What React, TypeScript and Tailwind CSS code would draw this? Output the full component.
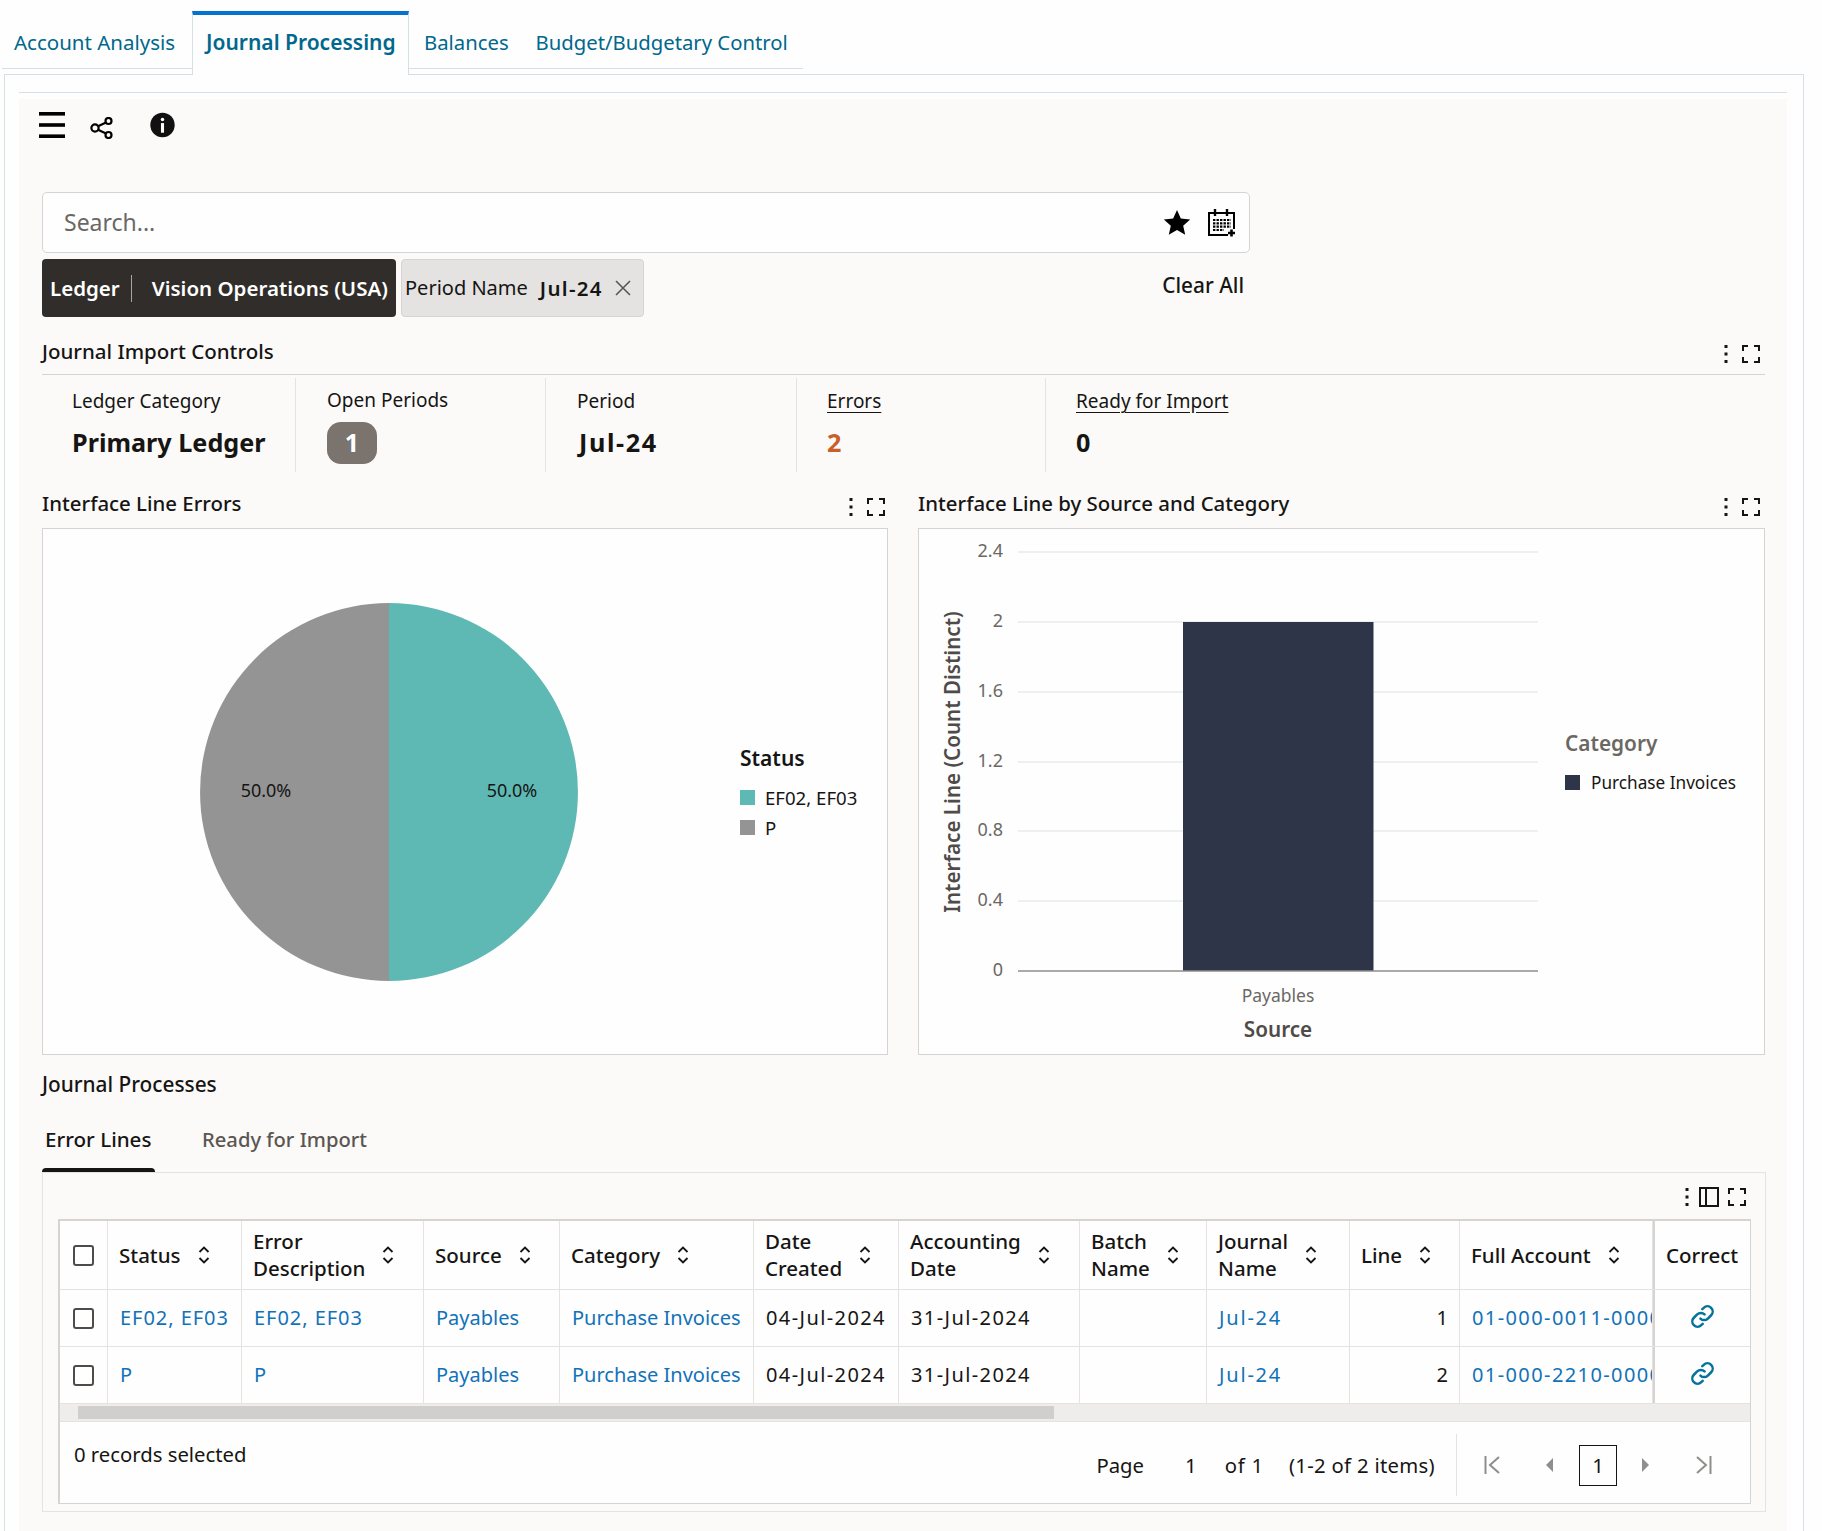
import React from "react";

const Kebab = () => (
  <svg width="5" height="20" viewBox="0 0 5 20" className="shrink-0"><rect x="0.5" y="1" width="3" height="3" fill="#161513"/><rect x="0.5" y="8.5" width="3" height="3" fill="#161513"/><rect x="0.5" y="16" width="3" height="3" fill="#161513"/></svg>
);
const Expand = () => (
  <svg width="18" height="18" viewBox="0 0 18 18" fill="none" stroke="#161513" strokeWidth="2" className="shrink-0">
    <path d="M1 6V1h5M12 1h5v5M17 12v5h-5M6 17H1v-5" />
  </svg>
);
const PanelTools = () => (
  <div className="flex items-center gap-[13px]"><Kebab /><Expand /></div>
);
const Sort = () => (
  <svg width="14" height="20" viewBox="0 0 14 20" fill="none" stroke="#161513" strokeWidth="1.8" className="shrink-0">
    <path d="M2.5 7 7 2.5 11.5 7M2.5 13 7 17.5 11.5 13" />
  </svg>
);
const Check = () => (
  <span className="block h-[21px] w-[21px] rounded-[3px] border-2 border-[#4f4b48] bg-white" />
);
const LinkIcon = () => (
  <svg width="25" height="25" viewBox="0 0 24 24" fill="none" stroke="#04729b" strokeWidth="2.4" strokeLinecap="round" strokeLinejoin="round">
    <path d="M10 14a5 5 0 0 0 7.1 0l3.2-3.2a5 5 0 0 0-7.1-7.1L11.8 5" />
    <path d="M14 10a5 5 0 0 0-7.1 0l-3.2 3.2a5 5 0 0 0 7.1 7.1l1.4-1.3" />
  </svg>
);

const cols = "grid grid-cols-[48px_134px_182px_136px_194px_145px_181px_127px_143px_110px_193px_97px]";
const th = "flex items-center gap-[16px] border-r border-[#e4e3e2] pl-[11px] text-[20.5px] leading-[27px] font-medium text-[#161513]";
const td = "flex items-center overflow-hidden whitespace-nowrap border-r border-[#e4e3e2] pl-[12px] text-[20px]";
const lnk = "text-[#1272b8]";
const num = "text-[20.5px] tracking-[1.4px]";

const headers: [string, string?][] = [
  ["Status"], ["Error", "Description"], ["Source"], ["Category"], ["Date", "Created"], ["Accounting", "Date"], ["Batch", "Name"], ["Journal", "Name"], ["Line"], ["Full Account"],
];
const rows = [
  { s: "EF02, EF03", l: "1", a: "01-000-0011-0000-000" },
  { s: "P", l: "2", a: "01-000-2210-0000-000" },
];

function BarChart() {
  const ys: [string, number][] = [["2.4", 23], ["2", 93], ["1.6", 163], ["1.2", 233], ["0.8", 302], ["0.4", 372]];
  return (
    <svg width="628" height="525" viewBox="0 0 628 525" className="shrink-0" style={{ fontFamily: "'Noto Sans', sans-serif" }}>
      {ys.map(([t, y]) => (
        <g key={t}>
          <line x1="99" x2="619" y1={y} y2={y} stroke="#e9ebea" strokeWidth="1.5" />
          <text x="84" y={y + 5} textAnchor="end" fontSize="18" fill="#6b6864">{t}</text>
        </g>
      ))}
      <text x="84" y="447" textAnchor="end" fontSize="18" fill="#6b6864">0</text>
      <rect x="264" y="93" width="190.5" height="349" fill="#2f3549" />
      <line x1="99" x2="619" y1="442" y2="442" stroke="#8f8e8c" strokeWidth="1.5" />
      <text x="359" y="473" textAnchor="middle" fontSize="17.5" fill="#6b6864">Payables</text>
      <text x="359" y="508" textAnchor="middle" fontSize="20.7" fontWeight="600" fill="#4f4b48">Source</text>
      <text transform="translate(41 233) rotate(-90)" textAnchor="middle" fontSize="20.6" fontWeight="600" fill="#4f4b48">Interface Line (Count Distinct)</text>
    </svg>
  );
}

export default function App() {
  return (
    <div className="h-[1531px] w-[1822px] overflow-hidden bg-[#fefefe] text-[#161513] [font-family:'Noto_Sans',sans-serif]">
      {/* top tabs */}
      <div className="relative z-10 flex h-[74px] items-start pl-[2px] pt-[11px] text-[20.5px] text-[#00688c]">
        <div className="flex h-[58px] w-[190px] items-center border-b border-[#d6dfe6] pl-[12px] pt-[5px]">Account Analysis</div>
        <div className="flex h-[64px] w-[217px] items-start border-x border-t-4 border-[#d6dfe6] border-t-[#0572ce] bg-[#fefefe] pl-[13px] pt-[12px] text-[21px] font-semibold">Journal Processing</div>
        <div className="flex h-[58px] w-[394px] items-center gap-[27px] border-b border-[#d6dfe6] pl-[15px] pt-[5px] text-[20.3px]">
          <span>Balances</span>
          <span>Budget/Budgetary Control</span>
        </div>
      </div>

      {/* outer panel */}
      <div className="ml-[4px] h-[1457px] w-[1800px] border-x border-t border-[#d6dfe6] pl-[14px] pr-[16px] pt-[17px]">
        <div className="h-[1px] bg-[#d6dfe6]" />
        <div className="mt-[6px] h-[1440px] bg-[#fbfaf9] pl-[23px] pr-[22px] pt-[13px]">
          {/* toolbar */}
          <div className="flex h-[26px] items-start">
            <svg width="26" height="26" viewBox="0 0 26 26" className="-ml-[3px] shrink-0"><rect width="26" height="3.6" y="0" fill="#000"/><rect width="26" height="3.6" y="11.2" fill="#000"/><rect width="26" height="3.6" y="22.4" fill="#000"/></svg>
            <svg width="24" height="22" viewBox="0 0 24 22" fill="none" stroke="#000" strokeWidth="2.2" className="ml-[25px] mt-[5px] shrink-0">
              <circle cx="18.5" cy="4" r="3" /><circle cx="18.5" cy="18" r="3" /><circle cx="5" cy="11" r="3.6" />
              <path d="M8 9.2 16 5.4M8 12.8l8 3.8" />
            </svg>
            <svg width="25" height="26" viewBox="0 0 26 26" className="ml-[36px] shrink-0">
              <circle cx="13" cy="13" r="12.7" fill="#111" />
              <rect x="11.2" y="5.5" width="3.6" height="3.6" rx="1.8" fill="#fff" />
              <rect x="11.4" y="11" width="3.2" height="10" fill="#fff" />
            </svg>
          </div>

          {/* search */}
          <div className="mt-[54px] flex h-[61px] w-[1208px] items-center rounded-[5px] border border-[#d5d4d2] bg-[#fefefe] pl-[21px] pr-[13px]">
            <span className="flex-1 text-[23px] text-[#6b6864]">Search...</span>
            <svg width="28" height="27" viewBox="0 0 24 24" className="shrink-0"><path d="M12 .8l3.4 7.6 8.3.9-6.2 5.5 1.8 8.1L12 18.7l-7.3 4.2 1.8-8.1L.3 9.3l8.3-.9z" fill="#000" /></svg>
            <svg width="29" height="29" viewBox="0 0 29 29" fill="none" stroke="#000" strokeWidth="2" className="ml-[16px] shrink-0">
              <path d="M21 27H2V5h25v16" />
              <path d="M8 1v7M20 1v7" strokeWidth="2.4" />
              <path d="M6 12h18M6 15.3h18M6 18.6h18M6 22h11" strokeWidth="2.2" strokeDasharray="2.4 1.1" />
              <path d="M24.5 21.5v7M21 25h7" strokeWidth="2.6" />
            </svg>
          </div>

          {/* chips */}
          <div className="mt-[6px] flex h-[58px] w-[1208px] items-start text-[20.5px]">
            <div className="flex h-[58px] w-[354px] items-center rounded-[4px] bg-[#312d2a] pl-[8px] font-semibold text-white">
              <span className="border-r border-[#a8a6a4] pr-[11px] leading-[27px]">Ledger</span>
              <span className="ml-[20px] whitespace-nowrap">Vision Operations (USA)</span>
            </div>
            <div className="ml-[5px] flex h-[58px] w-[243px] items-center rounded-[4px] border border-[#d5d4d2] bg-[#e4e3e2] pl-[3px] text-[20px]">
              <span>Period Name</span>
              <span className="ml-[12px] text-[20.5px] font-semibold tracking-[1.3px]">Jul-24</span>
              <svg width="16" height="16" viewBox="0 0 16 16" fill="none" stroke="#5b5652" strokeWidth="1.6" className="ml-[12px]"><path d="M1 1l14 14M15 1 1 15" /></svg>
            </div>
            <span className="ml-auto mr-[6px] mt-[11px] text-[20.8px] font-medium">Clear All</span>
          </div>

          {/* controls */}
          <div className="flex h-[58px] items-end justify-between border-b border-[#d5d4d2] pb-[8px]">
            <span className="text-[20.5px] leading-[30px] font-medium">Journal Import Controls</span>
            <span className="mb-[2px] mr-[5px]"><PanelTools /></span>
          </div>
          <div className="grid h-[97px] grid-cols-[254px_250px_251px_249px_1fr] pt-[3px] text-[19px]">
            <div className="border-r border-[#e4e3e2] pl-[30px]">
              <div className="pt-[10px] leading-[27px]">Ledger Category</div>
              <div className="mt-[9px] text-[25.2px] leading-[36px] font-bold">Primary Ledger</div>
            </div>
            <div className="border-r border-[#e4e3e2] pl-[31px]">
              <div className="pt-[9px] leading-[27px]">Open Periods</div>
              <div className="mt-[8px] flex h-[42px] w-[50px] items-center justify-center rounded-[14px] bg-[#7a736e] text-[25px] font-bold text-white">1</div>
            </div>
            <div className="border-r border-[#e4e3e2] pl-[33px]">
              <div className="-ml-[2px] pt-[10px] leading-[27px]">Period</div>
              <div className="mt-[9px] text-[25.2px] leading-[36px] font-bold tracking-[1.6px]">Jul-24</div>
            </div>
            <div className="border-r border-[#e4e3e2] pl-[30px]">
              <div className="pt-[10px] leading-[27px] underline underline-offset-4">Errors</div>
              <div className="mt-[9px] text-[25.2px] leading-[36px] font-bold text-[#c9602a]">2</div>
            </div>
            <div className="pl-[30px]">
              <div className="pt-[10px] leading-[27px] underline underline-offset-4">Ready for Import</div>
              <div className="mt-[9px] text-[25.2px] leading-[36px] font-bold">0</div>
            </div>
          </div>

          {/* charts */}
          <div className="grid grid-cols-[846px_847px] gap-x-[30px]">
            <div>
              <div className="flex h-[56px] items-end justify-between pb-[10px]">
                <span className="text-[20.4px] leading-[30px] font-medium">Interface Line Errors</span>
                <span className="mb-[1px] mr-[3px]"><PanelTools /></span>
              </div>
              <div className="flex h-[527px] items-center border border-[#d5d4d2] bg-[#fefefe]">
                <svg width="378" height="378" viewBox="0 0 378 378" className="ml-[157px] shrink-0" style={{ fontFamily: "'Noto Sans', sans-serif" }}>
                  <path d="M189 0A189 189 0 0 1 189 378Z" fill="#5eb9b4" />
                  <path d="M189 0A189 189 0 0 0 189 378Z" fill="#949494" />
                  <text x="66" y="194" textAnchor="middle" fontSize="18" fill="#161513">50.0%</text>
                  <text x="312" y="194" textAnchor="middle" fontSize="18" fill="#161513">50.0%</text>
                </svg>
                <div className="ml-[162px] mt-[4px] text-[18.6px]">
                  <div className="text-[21px] leading-[27px] font-semibold">Status</div>
                  <div className="mt-[11px] flex h-[30px] items-center gap-[10px]"><span className="h-[15px] w-[15px] bg-[#5eb9b4]" />EF02, EF03</div>
                  <div className="flex h-[30px] items-center gap-[10px]"><span className="h-[15px] w-[15px] bg-[#949494]" />P</div>
                </div>
              </div>
            </div>
            <div>
              <div className="flex h-[56px] items-end justify-between pb-[10px]">
                <span className="text-[20.4px] leading-[30px] font-medium">Interface Line by Source and Category</span>
                <span className="mb-[1px] mr-[5px]"><PanelTools /></span>
              </div>
              <div className="flex h-[527px] items-start border border-[#d5d4d2] bg-[#fefefe]">
                <BarChart />
                <div className="ml-[18px] mt-[201px]">
                  <div className="text-[20.8px] leading-[27px] font-semibold text-[#6b6864]">Category</div>
                  <div className="mt-[12px] flex h-[27px] items-center gap-[11px] text-[17.2px] whitespace-nowrap"><span className="h-[15px] w-[15px] bg-[#2f3549]" />Purchase Invoices</div>
                </div>
              </div>
            </div>
          </div>

          {/* journal processes */}
          <div className="flex h-[44px] items-end text-[20.8px] leading-[30px] font-medium">Journal Processes</div>
          <div className="mt-[27px] flex h-[46px]">
            <div className="relative w-[113px] pl-[3px] text-[20.6px] leading-[27px] font-medium">
              Error Lines
              <span className="absolute bottom-0 left-0 h-[4px] w-[113px] rounded-t-[4px] bg-[#161513]" />
            </div>
            <div className="ml-[47px] text-[20.2px] leading-[27px] font-medium text-[#5b5652]">Ready for Import</div>
          </div>
          <div className="h-[340px] w-[1724px] border border-[#e4e3e2] px-[15px]">
            <div className="flex h-[46px] items-center justify-end pr-[4px] pt-[2px]">
              <Kebab />
              <svg width="20" height="20" viewBox="0 0 20 20" fill="none" stroke="#161513" strokeWidth="2" className="ml-[9px] shrink-0"><rect x="1" y="1" width="18" height="18" /><path d="M7 1v18" /></svg>
              <span className="ml-[9px]"><Expand /></span>
            </div>
            <div className="h-[285px] w-[1693px] border-2 border-[#d5d4d2] border-r border-b bg-[#fefefe]">
              <div className={cols + " h-[69px] border-b border-[#e4e3e2]"}>
                <div className="flex items-center border-r border-[#e4e3e2] pl-[13px]"><Check /></div>
                {headers.map(([a, b]) => (
                  <div key={a} className={th}>
                    <span className="whitespace-nowrap">{a}{b && <br />}{b}</span>
                    <Sort />
                  </div>
                ))}
                <div className="flex items-center border-l-2 border-[#d5d4d2] pl-[11px] text-[20.5px] font-medium">Correct</div>
              </div>
              {rows.map((r) => (
                <div key={r.l} className={cols + " h-[57px] border-b border-[#e4e3e2]"}>
                  <div className="flex items-center border-r border-[#e4e3e2] pl-[13px]"><Check /></div>
                  <div className={td + " tracking-[0.95px] text-[20.5px] " + lnk}>{r.s}</div>
                  <div className={td + " tracking-[0.95px] text-[20.5px] " + lnk}>{r.s}</div>
                  <div className={td + " " + lnk}>Payables</div>
                  <div className={td + " " + lnk}>Purchase Invoices</div>
                  <div className={td + " " + num}>04-Jul-2024</div>
                  <div className={td + " " + num}>31-Jul-2024</div>
                  <div className={td} />
                  <div className={td + " text-[20.5px] tracking-[1.8px] " + lnk}>Jul-24</div>
                  <div className={td + " justify-end pr-[11px]"}>{r.l}</div>
                  <div className={td + " " + num + " " + lnk}>{r.a}</div>
                  <div className="flex items-center justify-center border-l-2 border-[#d5d4d2] pb-[4px]"><LinkIcon /></div>
                </div>
              ))}
              {/* scrollbar */}
              <div className="flex h-[18px] items-center border-b border-[#e4e3e2] bg-[#eeedec] pl-[18px] pr-[2px]">
                <div className="h-[13px] w-[976px] bg-[#d0cfcd]" />
              </div>
              {/* footer */}
              <div className="flex h-[81px] items-start justify-between pl-[14px] text-[20.3px]">
                <span className="mt-[19px] leading-[27px]">0 records selected</span>
                <div className="mt-[12px] flex h-[62px] items-center">
                  <span>Page</span>
                  <span className="ml-[41px]">1</span>
                  <span className="ml-[28px] tracking-[0.8px]">of 1</span>
                  <span className="ml-[25px] tracking-[0.3px]">(1-2 of 2 items)</span>
                  <div className="ml-[21px] flex h-[62px] items-center border-l border-[#e4e3e2] pl-[27px] pr-[38px]">
                    <svg width="17" height="18" viewBox="0 0 17 18" fill="none" stroke="#8f8e8c" strokeWidth="2" className="shrink-0"><path d="M1.5 0v18M15 1 6 9l9 8" /></svg>
                    <svg width="7" height="14" viewBox="0 0 7 14" className="ml-[45px] shrink-0"><path d="M7 0 0 7l7 7z" fill="#8f8e8c" /></svg>
                    <span className="ml-[26px] flex h-[41px] w-[38px] items-center justify-center border border-[#161513]">1</span>
                    <svg width="7" height="14" viewBox="0 0 7 14" className="ml-[25px] shrink-0"><path d="M0 0l7 7-7 7z" fill="#8f8e8c" /></svg>
                    <svg width="17" height="18" viewBox="0 0 17 18" fill="none" stroke="#8f8e8c" strokeWidth="2" className="ml-[46px] shrink-0"><path d="M15.5 0v18M2 1l9 8-9 8" /></svg>
                  </div>
                </div>
              </div>
            </div>
          </div>
        </div>
      </div>
    </div>
  );
}
